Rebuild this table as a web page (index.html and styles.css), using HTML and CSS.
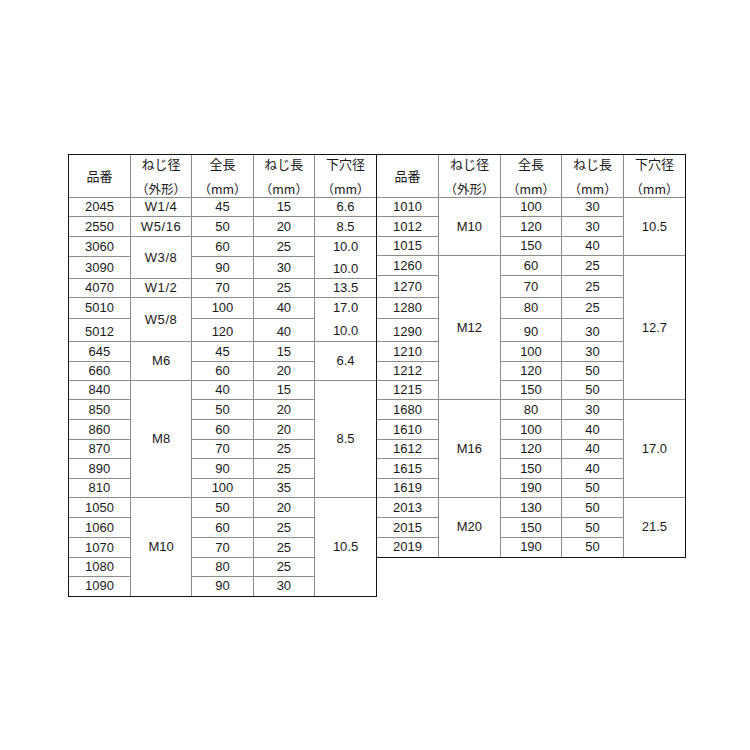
FILE: index.html
```html
<!DOCTYPE html>
<html lang="ja">
<head>
<meta charset="utf-8">
<title>寸法表</title>
<link rel="stylesheet" href="styles.css">
</head>
<body>
<div class="page">
  <div class="wrap left">
    <table class="spec">
      <thead>
        <tr class="hd">
          <th><span class="l1 solo">品番</span></th>
          <th><span class="l1">ねじ径</span><span class="l2">（外形）</span></th>
          <th><span class="l1">全長</span><span class="l2">（mm）</span></th>
          <th><span class="l1">ねじ長</span><span class="l2">（mm）</span></th>
          <th><span class="l1">下穴径</span><span class="l2">（mm）</span></th>
        </tr>
      </thead>
      <tbody>
        <tr class="h19"><td>2045</td><td class="wide">W1/4</td><td>45</td><td>15</td><td>6.6</td></tr>
        <tr class="h20"><td>2550</td><td class="wide">W5/16</td><td>50</td><td>20</td><td>8.5</td></tr>
        <tr class="h20"><td>3060</td><td rowspan="2" class="wide">W3/8</td><td>60</td><td>25</td><td class="nob">10.0</td></tr>
        <tr class="h22"><td>3090</td><td>90</td><td>30</td><td class="not low">10.0</td></tr>
        <tr class="h19"><td>4070</td><td class="wide">W1/2</td><td>70</td><td>25</td><td>13.5</td></tr>
        <tr class="h21"><td>5010</td><td rowspan="2" class="wide">W5/8</td><td>100</td><td>40</td><td class="nob">17.0</td></tr>
        <tr class="h23"><td class="low">5012</td><td class="low">120</td><td class="low">40</td><td class="not low">10.0</td></tr>
        <tr class="h20"><td>645</td><td rowspan="2">M6</td><td>45</td><td>15</td><td rowspan="2">6.4</td></tr>
        <tr class="h19"><td>660</td><td>60</td><td>20</td></tr>
        <tr class="h19"><td>840</td><td rowspan="6">M8</td><td>40</td><td>15</td><td rowspan="6">8.5</td></tr>
        <tr class="h20"><td>850</td><td>50</td><td>20</td></tr>
        <tr class="h20"><td>860</td><td>60</td><td>20</td></tr>
        <tr class="h19"><td>870</td><td>70</td><td>25</td></tr>
        <tr class="h20"><td>890</td><td>90</td><td>25</td></tr>
        <tr class="h19"><td>810</td><td>100</td><td>35</td></tr>
        <tr class="h20"><td>1050</td><td rowspan="5">M10</td><td>50</td><td>20</td><td rowspan="5">10.5</td></tr>
        <tr class="h20"><td>1060</td><td>60</td><td>25</td></tr>
        <tr class="h20"><td>1070</td><td>70</td><td>25</td></tr>
        <tr class="h19"><td>1080</td><td>80</td><td>25</td></tr>
        <tr class="h19"><td>1090</td><td>90</td><td>30</td></tr>
      </tbody>
    </table>
  </div>
  <div class="wrap right">
    <table class="spec">
      <thead>
        <tr class="hd">
          <th><span class="l1 solo">品番</span></th>
          <th><span class="l1">ねじ径</span><span class="l2">（外形）</span></th>
          <th><span class="l1">全長</span><span class="l2">（mm）</span></th>
          <th><span class="l1">ねじ長</span><span class="l2">（mm）</span></th>
          <th><span class="l1">下穴径</span><span class="l2">（mm）</span></th>
        </tr>
      </thead>
      <tbody>
        <tr class="h19"><td>1010</td><td rowspan="3">M10</td><td>100</td><td>30</td><td rowspan="3">10.5</td></tr>
        <tr class="h20"><td>1012</td><td>120</td><td>30</td></tr>
        <tr class="h19"><td>1015</td><td>150</td><td>40</td></tr>
        <tr class="h20"><td>1260</td><td rowspan="7">M12</td><td>60</td><td>25</td><td rowspan="7">12.7</td></tr>
        <tr class="h22"><td>1270</td><td>70</td><td>25</td></tr>
        <tr class="h21"><td>1280</td><td>80</td><td>25</td></tr>
        <tr class="h23"><td class="low">1290</td><td class="low">90</td><td class="low">30</td></tr>
        <tr class="h20"><td>1210</td><td>100</td><td>30</td></tr>
        <tr class="h19"><td>1212</td><td>120</td><td>50</td></tr>
        <tr class="h19"><td>1215</td><td>150</td><td>50</td></tr>
        <tr class="h20"><td>1680</td><td rowspan="5">M16</td><td>80</td><td>30</td><td rowspan="5">17.0</td></tr>
        <tr class="h20"><td>1610</td><td>100</td><td>40</td></tr>
        <tr class="h19"><td>1612</td><td>120</td><td>40</td></tr>
        <tr class="h20"><td>1615</td><td>150</td><td>40</td></tr>
        <tr class="h19"><td>1619</td><td>190</td><td>50</td></tr>
        <tr class="h20"><td>2013</td><td rowspan="3">M20</td><td>130</td><td>50</td><td rowspan="3">21.5</td></tr>
        <tr class="h20"><td>2015</td><td>150</td><td>50</td></tr>
        <tr class="h19"><td>2019</td><td>190</td><td>50</td></tr>
      </tbody>
    </table>
  </div>
</div>
</body>
</html>
```

FILE: styles.css
```css
html, body {
  margin: 0;
  padding: 0;
  background: #ffffff;
}

.page {
  display: flex;
  align-items: flex-start;
  padding: 154px 0 0 68px;
  font-family: "Liberation Sans", "Noto Sans CJK JP", sans-serif;
  font-size: 13px;
  color: #1a1a1a;
}

.wrap {
  box-sizing: border-box;
  width: 309px;
  border: 1px solid #141414;
}

.wrap.right {
  border-left: none;
}

.spec {
  width: 100%;
  table-layout: fixed;
  border-collapse: collapse;
  border-style: hidden;
}

.spec th,
.spec td {
  border: 1px solid #8c8c8c;
  padding: 0;
  text-align: center;
  vertical-align: middle;
  line-height: 14px;
  font-weight: normal;
}

.spec th {
  font-family: "Noto Sans CJK JP", sans-serif;
  font-size: 13px;
  height: 42px;
}

.spec th .l1,
.spec th .l2 {
  display: block;
  line-height: 16px;
}

.spec th .l2 {
  margin-top: 9px;
  font-size: 12.5px;
}

.spec td.wide {
  letter-spacing: 0.6px;
}

.spec td.nob {
  border-bottom-style: hidden;
}

.spec td.low {
  padding-top: 3px;
}

.h19 { height: 19px; }
.h20 { height: 20px; }
.h21 { height: 21px; }
.h22 { height: 22px; }
.h23 { height: 23px; }
```
